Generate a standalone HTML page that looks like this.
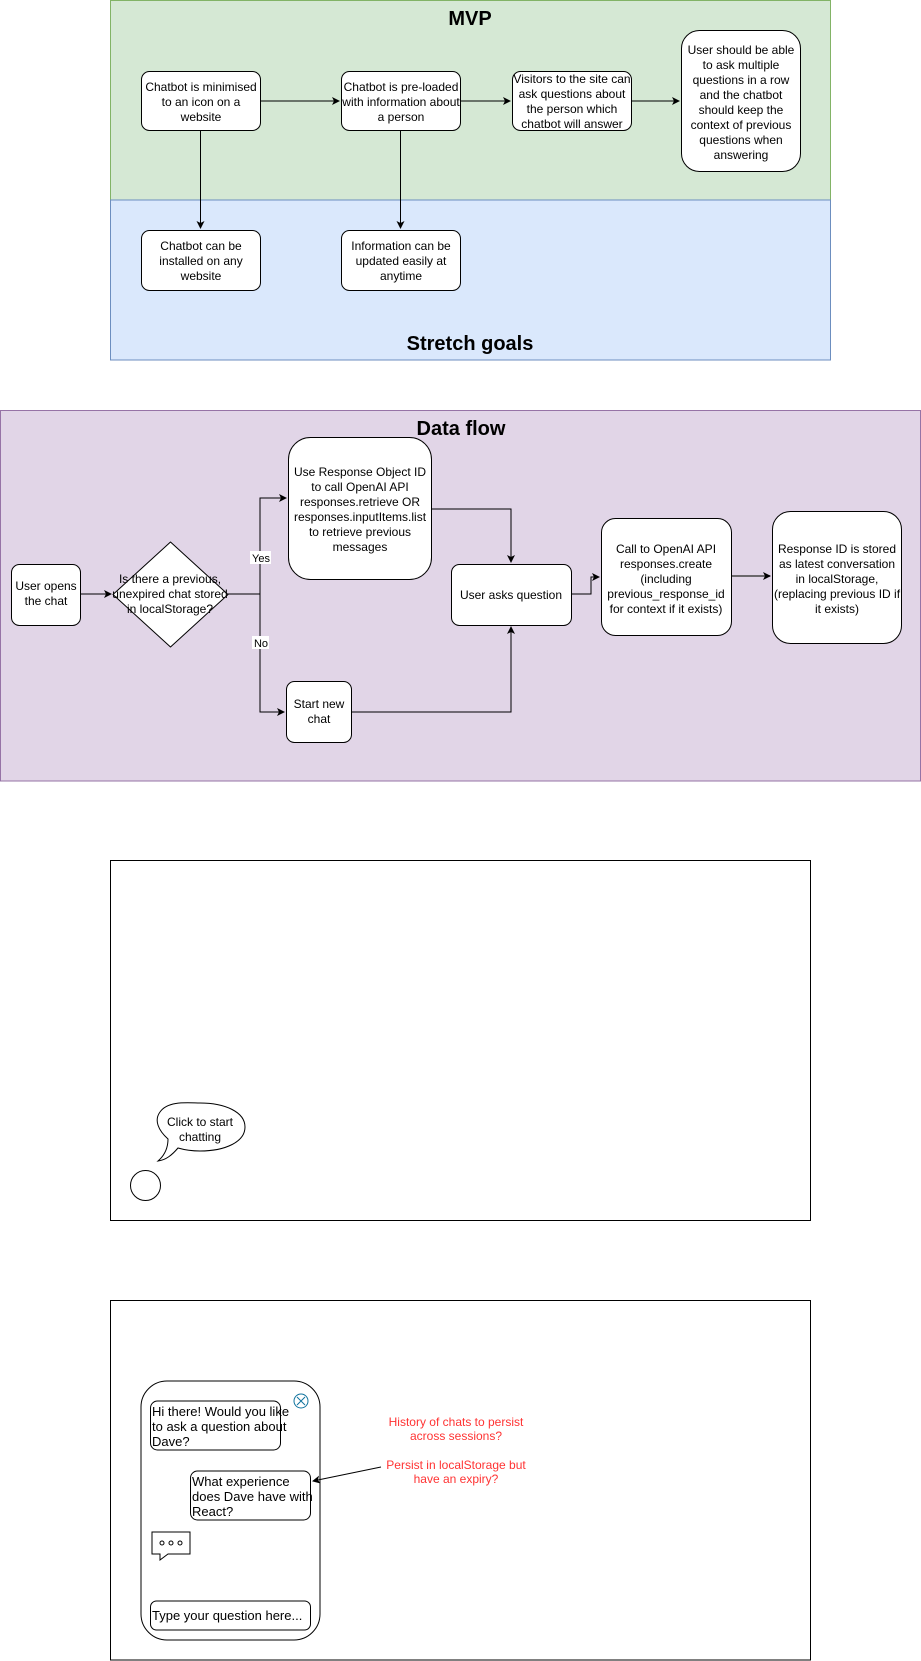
<!DOCTYPE html>
<html><head><meta charset="utf-8"><style>
html,body{margin:0;padding:0;background:#fff;width:921px;height:1661px;overflow:hidden}
svg{display:block}
text{font-family:"Liberation Sans",sans-serif;font-size:12px;fill:#000}
.t{text-anchor:middle}
.b{fill:#fff;stroke:#000;stroke-width:1}
.l{fill:none;stroke:#000;stroke-width:1}
</style></head><body>
<svg width="921" height="1661" viewBox="0 0 921 1661">
<defs><marker id="a" markerWidth="8" markerHeight="8" refX="7" refY="4" orient="auto" markerUnits="userSpaceOnUse"><path d="M0,0 L8,4 L0,8 L2,4 z" fill="#000"/></marker></defs>
<!-- MVP -->
<rect x="110.5" y="0.5" width="720" height="199.5" fill="#d5e8d4" stroke="#82b366"/>
<rect x="110.5" y="200" width="720" height="160" fill="#dae8fc" stroke="#6c8ebf"/>
<text class="t" x="470" y="25" style="font-size:20px;font-weight:bold">MVP</text>
<text class="t" x="470" y="350" style="font-size:20px;font-weight:bold">Stretch goals</text>
<path class="l" d="M260,101 H339" marker-end="url(#a)"/>
<path class="l" d="M460,101 H510" marker-end="url(#a)"/>
<path class="l" d="M631,101 H679" marker-end="url(#a)"/>
<path class="l" d="M200.5,131 V228" marker-end="url(#a)"/>
<path class="l" d="M400.5,131 V228" marker-end="url(#a)"/>
<rect class="b" x="141.5" y="71.5" width="119" height="59" rx="8"/>
<text class="t" x="201" y="91">Chatbot is minimised<tspan x="201" dy="15">to an icon on a</tspan><tspan x="201" dy="15">website</tspan></text>
<rect class="b" x="341.5" y="71.5" width="119" height="59" rx="8"/>
<text class="t" x="401" y="91">Chatbot is pre-loaded<tspan x="401" dy="15">with information about</tspan><tspan x="401" dy="15">a person</tspan></text>
<rect class="b" x="512.5" y="71.5" width="119" height="59" rx="8"/>
<text class="t" x="572" y="83">Visitors to the site can<tspan x="572" dy="15">ask questions about</tspan><tspan x="572" dy="15">the person which</tspan><tspan x="572" dy="15">chatbot will answer</tspan></text>
<rect class="b" x="681.5" y="30.5" width="119" height="141" rx="18"/>
<text class="t" x="741" y="54">User should be able<tspan x="741" dy="15">to ask multiple</tspan><tspan x="741" dy="15">questions in a row</tspan><tspan x="741" dy="15">and the chatbot</tspan><tspan x="741" dy="15">should keep the</tspan><tspan x="741" dy="15">context of previous</tspan><tspan x="741" dy="15">questions when</tspan><tspan x="741" dy="15">answering</tspan></text>
<rect class="b" x="141.5" y="230.5" width="119" height="60" rx="8"/>
<text class="t" x="201" y="250">Chatbot can be<tspan x="201" dy="15">installed on any</tspan><tspan x="201" dy="15">website</tspan></text>
<rect class="b" x="341.5" y="230.5" width="119" height="60" rx="8"/>
<text class="t" x="401" y="250">Information can be<tspan x="401" dy="15">updated easily at</tspan><tspan x="401" dy="15">anytime</tspan></text>
<!-- Data flow -->
<rect x="0.5" y="410.5" width="920" height="370.5" fill="#e1d5e7" stroke="#9673a6"/>
<text class="t" x="461" y="435" style="font-size:20px;font-weight:bold">Data flow</text>
<g transform="translate(0,-4)">
<path class="l" d="M80,598 H111" marker-end="url(#a)"/>
<path class="l" d="M228,598 H260 V502 H286" marker-end="url(#a)"/>
<path class="l" d="M260,598 V716 H284" marker-end="url(#a)"/>
<path class="l" d="M431,513 H511 V566" marker-end="url(#a)"/>
<path class="l" d="M351,716 H511 V631" marker-end="url(#a)"/>
<path class="l" d="M571,598 H591 V581 H599" marker-end="url(#a)"/>
<path class="l" d="M731,580 H770" marker-end="url(#a)" style="stroke:#444;stroke-width:1.5"/>
<rect x="250" y="555" width="21" height="13" fill="#fff"/><text class="t" x="261" y="566" style="font-size:11px">Yes</text>
<rect x="252" y="640" width="17" height="13" fill="#fff"/><text class="t" x="261" y="651" style="font-size:11px">No</text>
<rect class="b" x="11.5" y="568.5" width="69" height="61" rx="8"/>
<text class="t" x="46" y="594">User opens<tspan x="46" dy="15">the chat</tspan></text>
<path class="b" d="M170.5,546 L228,598.5 L170.5,651 L113,598.5 z" stroke-linejoin="round"/>
<text class="t" x="170" y="587">Is there a previous,<tspan x="170" dy="15">unexpired chat stored</tspan><tspan x="170" dy="15">in localStorage?</tspan></text>
<rect class="b" x="288.5" y="441.5" width="143" height="142" rx="22"/>
<text class="t" x="360" y="480">Use Response Object ID<tspan x="360" dy="15">to call OpenAI API</tspan><tspan x="360" dy="15">responses.retrieve OR</tspan><tspan x="360" dy="15">responses.inputItems.list</tspan><tspan x="360" dy="15">to retrieve previous</tspan><tspan x="360" dy="15">messages</tspan></text>
<rect class="b" x="286.5" y="685.5" width="65" height="61" rx="8"/>
<text class="t" x="319" y="712">Start new<tspan x="319" dy="15">chat</tspan></text>
<rect class="b" x="451.5" y="568.5" width="120" height="61" rx="8"/>
<text class="t" x="511" y="603">User asks question</text>
<rect class="b" x="601.5" y="522.5" width="130" height="117" rx="14"/>
<text class="t" x="666" y="557">Call to OpenAI API<tspan x="666" dy="15">responses.create</tspan><tspan x="666" dy="15">(including</tspan><tspan x="666" dy="15">previous_response_id</tspan><tspan x="666" dy="15">for context if it exists)</tspan></text>
<rect class="b" x="772.5" y="515.5" width="129" height="132" rx="18"/>
<text class="t" x="837" y="557">Response ID is stored<tspan x="837" dy="15">as latest conversation</tspan><tspan x="837" dy="15">in localStorage,</tspan><tspan x="837" dy="15">(replacing previous ID if</tspan><tspan x="837" dy="15">it exists)</tspan></text>
</g>
<!-- Box 3 -->
<rect x="110.5" y="860.5" width="700" height="360" fill="#fff" stroke="#000"/>
<path class="b" d="M168,1139 C158,1130 154,1120 160,1112 C168,1100 190,1103 200,1103 C225,1103 245,1112 245,1127 C245,1142 225,1151 200,1151 C192,1151 185,1150 178,1148 C172,1155 166,1160 158,1161 C165,1155 168,1148 168,1139 z"/>
<text class="t" x="200" y="1126">Click to start<tspan x="200" dy="15">chatting</tspan></text>
<circle class="b" cx="145.5" cy="1185.5" r="15"/>
<!-- Box 4 -->
<rect x="110.5" y="1300.5" width="700" height="359.5" fill="#fff" stroke="#000"/>
<rect class="b" x="141" y="1381" width="179" height="259" rx="26"/>
<circle cx="301" cy="1401" r="7" fill="none" stroke="#10739e"/>
<path d="M297,1397 L305,1405 M305,1397 L297,1405" stroke="#10739e" fill="none"/>
<rect class="b" x="150.5" y="1401" width="130" height="49" rx="7"/>
<text x="152" y="1416" style="font-size:13px">Hi there! Would you like<tspan x="152" dy="15">to ask a question about</tspan><tspan x="152" dy="15">Dave?</tspan></text>
<rect class="b" x="190.5" y="1471" width="120" height="49" rx="7"/>
<text x="192" y="1486" style="font-size:13px">What experience<tspan x="192" dy="15">does Dave have with</tspan><tspan x="192" dy="15">React?</tspan></text>
<path class="b" d="M152,1532 H190 V1554 H168 L160,1560 V1554 H152 z"/>
<circle cx="162" cy="1543" r="2" fill="none" stroke="#000"/><circle cx="171" cy="1543" r="2" fill="none" stroke="#000"/><circle cx="180" cy="1543" r="2" fill="none" stroke="#000"/>
<rect class="b" x="150.5" y="1601" width="160" height="29" rx="6"/>
<text x="152" y="1620" style="font-size:13px">Type your question here...</text>
<path class="l" d="M381,1467 L313,1481" marker-end="url(#a)"/>
<text class="t" x="456" y="1426" style="fill:#ff3333">History of chats to persist<tspan x="456" dy="14">across sessions?</tspan></text>
<text class="t" x="456" y="1469" style="fill:#ff3333">Persist in localStorage but<tspan x="456" dy="14">have an expiry?</tspan></text>
</svg>
</body></html>
